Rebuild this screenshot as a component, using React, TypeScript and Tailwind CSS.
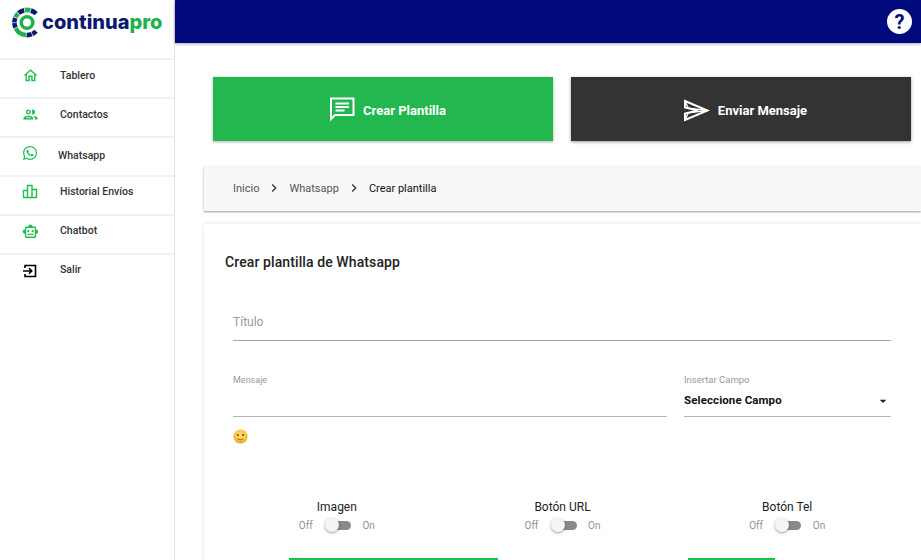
import type { ReactNode } from "react";
import { FaWhatsapp } from "react-icons/fa";
import { MdOutlineHome, MdOutlinePeople, MdOutlineSmartToy, MdArrowDropDown, MdChevronRight } from "react-icons/md";

const NAVY = "#0a1a70";
const GREEN = "#1fb24c";

// outer ring of the logo: [start angle, end angle, colour], degrees clockwise from 3 o'clock
const ringSegments: [number, number, string][] = [
  [-44, -72, NAVY],
  [-75, -100, GREEN],
  [-103, -132, NAVY],
  [-135, -156, GREEN],
  [-159, -180, NAVY],
  [-183, -204, NAVY],
  [-207, -265, GREEN],
  [-268, -292, NAVY],
  [-295, -316, NAVY],
];

function arc(start: number, end: number, r: number) {
  const cx = 15;
  const cy = 15.5;
  const toXY = (a: number) => {
    const rad = (a * Math.PI) / 180;
    return `${(cx + r * Math.cos(rad)).toFixed(2)} ${(cy + r * Math.sin(rad)).toFixed(2)}`;
  };
  return `M${toXY(start)}A${r} ${r} 0 0 0 ${toXY(end)}`;
}

function LogoMark() {
  return (
    <svg width="29" height="31" viewBox="0 0 29 31" fill="none" className="shrink-0">
      {ringSegments.map(([start, end, color]) => (
        <path key={start} d={arc(start, end, 12.6)} stroke={color} strokeWidth="4.6" />
      ))}
      <circle cx="15" cy="15.5" r="5.8" stroke={GREEN} strokeWidth="3.6" />
    </svg>
  );
}

function BarsIcon() {
  return (
    <svg width="16" height="16" viewBox="0 0 16 16" fill="none" stroke="currentColor" strokeWidth="1.4" className="-mt-[3px]">
      <path d="M1.5 14.5V7.5H5.5V14.5M5.5 14.5V2.5H10V14.5M10 14.5V6.5H14.5V14.5M1 14.5H15" />
    </svg>
  );
}

function ExitIcon() {
  return (
    <svg width="16" height="16" viewBox="0 0 16 16" fill="none" stroke="currentColor" strokeWidth="1.6">
      <path d="M3 5V2.5H13.5V13.5H3V11" />
      <path d="M1 8H9.5M7 5.2L9.8 8L7 10.8" />
    </svg>
  );
}

function ChatIcon() {
  return (
    <svg width="26" height="25" viewBox="0 0 26 25" fill="none" stroke="white" strokeWidth="2" className="-mt-[4px]">
      <path d="M2 1.5H24.5V18H6L2 22Z" />
      <path d="M6.5 6.5H20M6.5 10H20M6.5 13.5H15.5" />
    </svg>
  );
}

function SendIcon() {
  return (
    <svg width="27" height="23" viewBox="0 0 27 23" fill="none" stroke="white" strokeWidth="2" className="-mt-[2px]">
      <path d="M2 2L24.5 11.5L2 21V14.5L15 11.5L2 8.5Z" />
      <path d="M2 2L5 8.5M2 21L5 14.5M5 9.2L24.5 11.5L5 13.8" strokeWidth="1.3" />
    </svg>
  );
}

function Emoji() {
  return (
    <svg width="15" height="15" viewBox="0 0 15 15">
      <defs>
        <radialGradient id="face" cx="50%" cy="40%" r="60%">
          <stop offset="0%" stopColor="#fde27a" />
          <stop offset="70%" stopColor="#f8c23c" />
          <stop offset="100%" stopColor="#ea8f1c" />
        </radialGradient>
      </defs>
      <circle cx="7.5" cy="7.5" r="7" fill="url(#face)" />
      <circle cx="5" cy="6" r="0.9" fill="#5b3a12" />
      <circle cx="10" cy="6" r="0.9" fill="#5b3a12" />
      <path d="M4.8 10.2Q7.5 11.4 10.2 10.2" stroke="#8a5a1c" strokeWidth="0.8" fill="none" />
    </svg>
  );
}

function Logo() {
  return (
    <div className="flex items-center pl-[12px] pt-[7px]">
      <LogoMark />
      <div className="ml-[1px] -mt-[1px] font-['Inter',sans-serif] font-extrabold text-[20px] leading-none">
        <span className="text-[#0a1a70]">continua</span>
        <span className="text-[#1fb24c]">pro</span>
      </div>
    </div>
  );
}

function NavItem({ icon, label, iconClass, labelClass }: { icon: ReactNode; label: string; iconClass?: string; labelClass?: string }) {
  return (
    <div className="flex items-center h-[39px] pb-[6px] border-t-2 border-[#f1f1f1] text-[#333333]">
      <div className={`w-[60px] flex justify-center ${iconClass ?? "text-[#1fbe4f]"}`}>{icon}</div>
      <span className={`text-[10.5px] font-medium ${labelClass ?? ""}`}>{label}</span>
    </div>
  );
}

function ToggleField({ label, className }: { label: string; className: string }) {
  return (
    <div className={`flex flex-col items-center ${className}`}>
      <div className="text-[12px] leading-[14px] text-[#222222]">{label}</div>
      <div className="flex items-center mt-[4px] text-[10px] text-[#8f8f8f] h-[14px]">
        <span className="w-[26px]">Off</span>
        <div className="relative w-[26px] h-[14px] flex items-center">
          <div className="ml-[3px] w-[23px] h-[9px] rounded-full bg-[#8a8a8a]" />
          <div className="absolute left-0 top-0 w-[14px] h-[14px] rounded-full bg-[#f5f5f5] shadow-[0_1px_3px_rgba(0,0,0,0.4)]" />
        </div>
        <span className="w-[24px] text-right">On</span>
      </div>
    </div>
  );
}

export default function App() {
  return (
    <div className="flex h-[560px] w-[921px] overflow-hidden bg-white font-['Roboto',sans-serif]">
      <aside className="w-[175px] shrink-0 border-r border-[#e4e4e4] bg-white">
        <div className="h-[58px]">
          <Logo />
        </div>
        <NavItem icon={<MdOutlineHome size={17} />} label="Tablero" />
        <NavItem icon={<MdOutlinePeople size={17} />} label="Contactos" />
        <NavItem icon={<FaWhatsapp size={16} className="-mt-[2px]" />} label="Whatsapp" labelClass="-ml-[2px] mt-[4px]" />
        <NavItem icon={<BarsIcon />} label="Historial Envíos" labelClass="-mt-[2px]" />
        <NavItem icon={<MdOutlineSmartToy size={17} />} label="Chatbot" labelClass="-mt-[2px]" />
        <NavItem icon={<ExitIcon />} label="Salir" iconClass="text-black" labelClass="-mt-[2px]" />
      </aside>

      <main className="flex-1 min-w-0">
        <header className="h-[43px] bg-[#000a7c] shadow-[0_1px_3px_rgba(0,0,0,0.35)] flex items-center justify-end pr-[9px]">
          <div className="w-[25px] h-[25px] rounded-full bg-white flex items-center justify-center text-[#000a7c] text-[20px] font-bold leading-none">?</div>
        </header>

        <div className="flex gap-[18px] pl-[38px] pt-[34px]">
          <button className="w-[340px] h-[64px] pl-[9px] pt-[4px] bg-[#22b74f] shadow-[0_1px_3px_rgba(0,0,0,0.3)] flex items-center justify-center gap-[8px] text-white text-[13px] font-bold">
            <ChatIcon />
            Crear Plantilla
          </button>
          <button className="w-[340px] h-[64px] pt-[4px] pl-[8px] bg-[#333333] shadow-[0_1px_3px_rgba(0,0,0,0.4)] flex items-center justify-center gap-[8px] text-white text-[13px] font-bold">
            <SendIcon />
            Enviar Mensaje
          </button>
        </div>

        <nav className="ml-[29px] mt-[25px] h-[45px] pt-[1px] bg-[#f7f7f7] shadow-[0_1px_2px_rgba(0,0,0,0.4)] flex items-center pl-[29px] text-[11px] text-[#555555]">
          <span>Inicio</span>
          <MdChevronRight size={16} className="mx-[7px] -mt-[2px] text-[#333333]" />
          <span>Whatsapp</span>
          <MdChevronRight size={16} className="mx-[7px] -mt-[2px] text-[#333333]" />
          <span className="text-[#111111]">Crear plantilla</span>
        </nav>

        <section className="ml-[29px] mt-[13px] h-[400px] bg-white shadow-[0_0_4px_rgba(0,0,0,0.12)] pl-[21px] pr-[30px] pt-[29px]">
          <h1 className="text-[14px] leading-[18px] font-medium tracking-[0.1px] text-[#222222]">Crear plantilla de Whatsapp</h1>

          <div className="ml-[8px] mt-[42px] h-[28px] border-b border-[#a8a8a8] text-[12px] leading-[18px] text-[#9a9a9a]">Título</div>

          <div className="flex ml-[8px] mt-[33px] gap-[17px]">
            <div className="w-[434px]">
              <div className="text-[9px] leading-[12px] text-[#9a9a9a]">Mensaje</div>
              <div className="h-[31px] border-b border-[#b5b5b5]" />
              <div className="mt-[12px]">
                <Emoji />
              </div>
            </div>
            <div className="flex-1">
              <div className="text-[9.5px] leading-[12px] text-[#9a9a9a]">Insertar Campo</div>
              <div className="h-[31px] border-b border-[#b5b5b5] flex items-center justify-between text-[11.5px] font-bold tracking-[0.1px] text-[#111111]">
                <span>Seleccione Campo</span>
                <MdArrowDropDown size={16} className="text-[#222222]" />
              </div>
            </div>
          </div>

          <div className="flex items-start ml-[8px] mt-[56px]">
            <ToggleField label="Imagen" className="w-[208px]" />
            <ToggleField label="Botón URL" className="w-[208px] ml-[18px]" />
            <ToggleField label="Botón Tel" className="w-[208px] ml-[17px]" />
          </div>

          <div className="flex ml-[8px] mt-[26px]">
            <div className="ml-[56px] w-[209px] h-[2px] bg-[#1fbe4f]" />
            <div className="ml-[190px] w-[87px] h-[2px] bg-[#1fbe4f]" />
          </div>
        </section>
      </main>
    </div>
  );
}
